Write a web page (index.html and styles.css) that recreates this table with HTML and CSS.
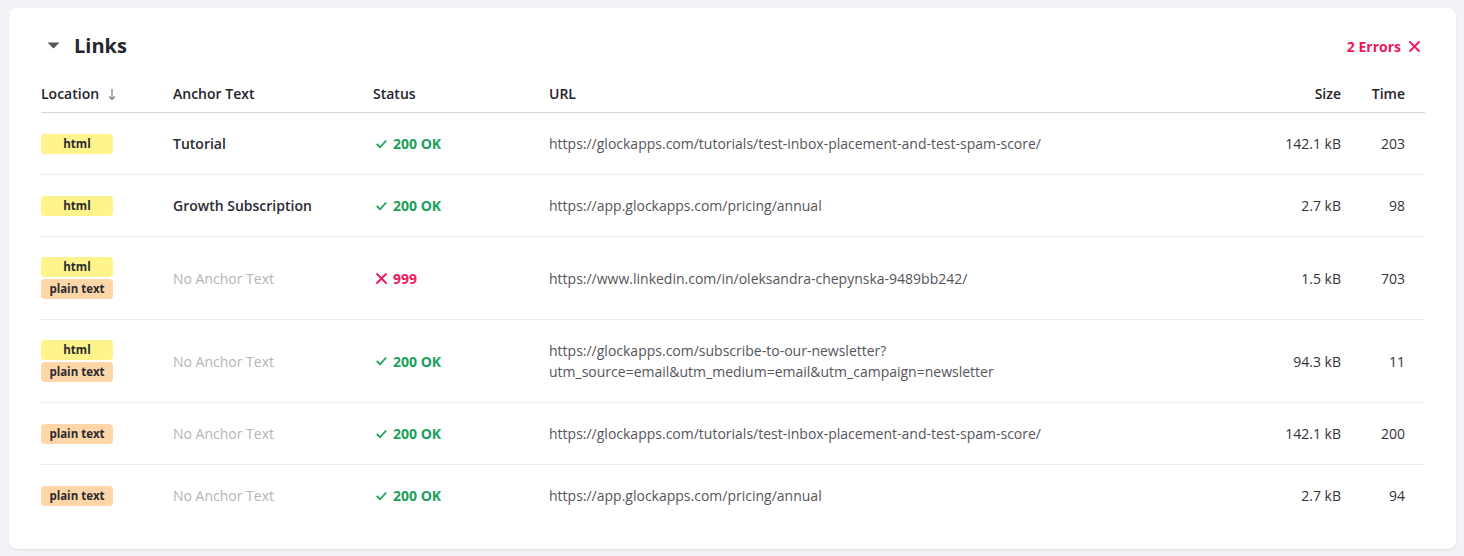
FILE: index.html
```html
<!DOCTYPE html>
<html>
<head>
<meta charset="utf-8">
<link rel="stylesheet" href="styles.css">
</head>
<body>
<div class="card">
  <div class="card-head">
    <div class="title">
      <svg class="caret" width="13" height="7" viewBox="0 0 13 7"><path d="M0.5 0.5 H12.5 L6.5 6.5 Z" fill="#555"/></svg>
      <span>Links</span>
    </div>
    <div class="errors">2 Errors
      <svg width="11" height="11" viewBox="0 0 11 11"><path d="M1 1 L10 10 M10 1 L1 10" stroke="#f0185a" stroke-width="1.8" stroke-linecap="round"/></svg>
    </div>
  </div>
  <div class="table">
    <div class="row head">
      <div class="c loc">Location<svg class="sort" width="8" height="13" viewBox="0 0 8 13"><path d="M4 1 V11.5 M1 8.5 L4 11.5 L7 8.5" fill="none" stroke="#7c7c82" stroke-width="1.2"/></svg></div>
      <div class="c">Anchor Text</div>
      <div class="c">Status</div>
      <div class="c">URL</div>
      <div class="c r">Size</div>
      <div class="c r">Time</div>
      <div class="c"></div>
    </div>

    <div class="row">
      <div class="c badges"><span class="badge html">html</span></div>
      <div class="c anchor">Tutorial</div>
      <div class="c status ok"><svg width="11" height="10" viewBox="0 0 11 10"><path d="M0.8 5 L4 8.3 L10.2 1.5" fill="none" stroke="#19a15a" stroke-width="1.8"/></svg>200 OK</div>
      <div class="c url">https://glockapps.com/tutorials/test-inbox-placement-and-test-spam-score/</div>
      <div class="c r num">142.1 kB</div>
      <div class="c r num">203</div>
      <div class="c"></div>
    </div>

    <div class="row">
      <div class="c badges"><span class="badge html">html</span></div>
      <div class="c anchor">Growth Subscription</div>
      <div class="c status ok"><svg width="11" height="10" viewBox="0 0 11 10"><path d="M0.8 5 L4 8.3 L10.2 1.5" fill="none" stroke="#19a15a" stroke-width="1.8"/></svg>200 OK</div>
      <div class="c url">https://app.glockapps.com/pricing/annual</div>
      <div class="c r num">2.7 kB</div>
      <div class="c r num">98</div>
      <div class="c"></div>
    </div>

    <div class="row">
      <div class="c badges"><span class="badge html">html</span><span class="badge plain">plain text</span></div>
      <div class="c anchor none">No Anchor Text</div>
      <div class="c status err"><svg width="11" height="11" viewBox="0 0 11 11"><path d="M1 1 L10 10 M10 1 L1 10" stroke="#f0185a" stroke-width="1.8" stroke-linecap="round"/></svg>999</div>
      <div class="c url">https://www.linkedin.com/in/oleksandra-chepynska-9489bb242/</div>
      <div class="c r num">1.5 kB</div>
      <div class="c r num">703</div>
      <div class="c"></div>
    </div>

    <div class="row">
      <div class="c badges"><span class="badge html">html</span><span class="badge plain">plain text</span></div>
      <div class="c anchor none">No Anchor Text</div>
      <div class="c status ok"><svg width="11" height="10" viewBox="0 0 11 10"><path d="M0.8 5 L4 8.3 L10.2 1.5" fill="none" stroke="#19a15a" stroke-width="1.8"/></svg>200 OK</div>
      <div class="c url">https://glockapps.com/subscribe-to-our-newsletter?<br>utm_source=email&amp;utm_medium=email&amp;utm_campaign=newsletter</div>
      <div class="c r num">94.3 kB</div>
      <div class="c r num">11</div>
      <div class="c"></div>
    </div>

    <div class="row">
      <div class="c badges"><span class="badge plain">plain text</span></div>
      <div class="c anchor none">No Anchor Text</div>
      <div class="c status ok"><svg width="11" height="10" viewBox="0 0 11 10"><path d="M0.8 5 L4 8.3 L10.2 1.5" fill="none" stroke="#19a15a" stroke-width="1.8"/></svg>200 OK</div>
      <div class="c url">https://glockapps.com/tutorials/test-inbox-placement-and-test-spam-score/</div>
      <div class="c r num">142.1 kB</div>
      <div class="c r num">200</div>
      <div class="c"></div>
    </div>

    <div class="row last">
      <div class="c badges"><span class="badge plain">plain text</span></div>
      <div class="c anchor none">No Anchor Text</div>
      <div class="c status ok"><svg width="11" height="10" viewBox="0 0 11 10"><path d="M0.8 5 L4 8.3 L10.2 1.5" fill="none" stroke="#19a15a" stroke-width="1.8"/></svg>200 OK</div>
      <div class="c url">https://app.glockapps.com/pricing/annual</div>
      <div class="c r num">2.7 kB</div>
      <div class="c r num">94</div>
      <div class="c"></div>
    </div>
  </div>
</div>
</body>
</html>
```

FILE: styles.css
```css
* { box-sizing: border-box; }
html, body { margin: 0; }
body {
  background: #f2f3f7;
  padding: 8px 8px 7px 9px;
  font-family: "Open Sans", "Liberation Sans", sans-serif;
  color: #2a2a33;
  font-size: 14px;
}
.card {
  background: #fff;
  border-radius: 8px;
  box-shadow: 0 1px 2px rgba(0,0,0,0.08);
  padding: 24px 31px 22px 32px;
  height: 541px;
}
.card-head {
  display: flex;
  align-items: center;
  justify-content: space-between;
  height: 28px;
  margin-bottom: 16px;
}
.title {
  display: flex;
  align-items: center;
  font-size: 20px;
  font-weight: 700;
  color: #26262e;
  line-height: 28px;
}
.caret { margin-left: 6px; margin-right: 14px; margin-top: -2px; }
.errors {
  display: flex;
  align-items: center;
  gap: 8px;
  color: #f0185a;
  font-weight: 700;
  font-size: 14px;
  margin-right: 5px;
}
.table { display: flex; flex-direction: column; }
.row {
  display: grid;
  grid-template-columns: 132px 200px 176px 1fr 100px 64px 20px;
  align-items: center;
  padding: 20px 0;
  line-height: 21px;
  border-bottom: 1px solid #ebebee;
}
.row.head {
  padding: 8px 0;
  height: 37px;
  font-weight: 600;
  color: #23232b;
  line-height: 20px;
  border-bottom: 1px solid #d6d6da;
}
.row.last { border-bottom: none; }
.r { text-align: right; }
.loc { display: flex; align-items: center; }
.sort { margin-left: 9px; }
.badges { display: flex; flex-direction: column; gap: 2px; }
.badge {
  display: block;
  width: 72px;
  height: 20px;
  line-height: 20px;
  border-radius: 4px;
  text-align: center;
  font-size: 11.5px;
  font-weight: 700;
  color: #2a2a30;
}
.badge.html { background: #fff48b; }
.badge.plain { background: #ffd6a8; }
.anchor { font-weight: 600; color: #2a2a33; }
.anchor.none { font-weight: 400; color: #b4b4b8; }
.status {
  display: flex;
  align-items: center;
  gap: 6px;
  font-weight: 700;
  padding-left: 3px;
}
.status.ok { color: #19a15a; }
.status.err { color: #f0185a; }
.url { color: #55555c; }
.num { color: #33333a; }
```
